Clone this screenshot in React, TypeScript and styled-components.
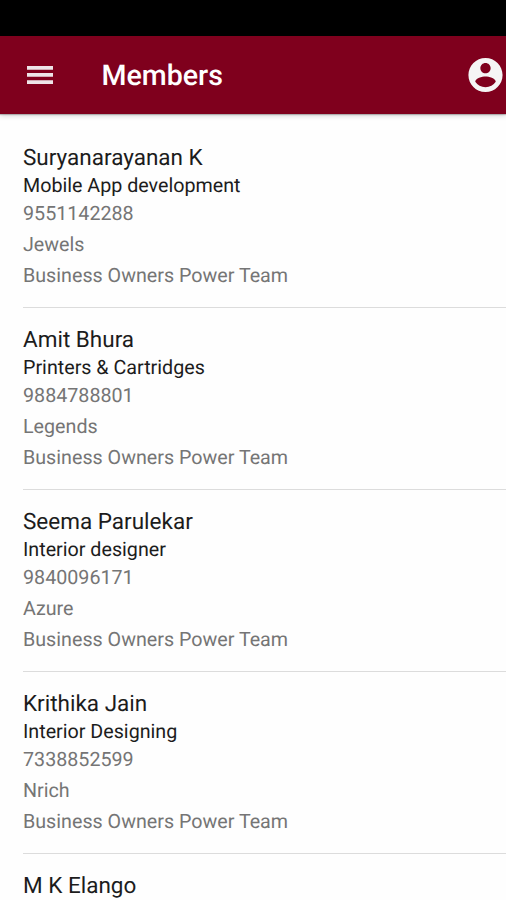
import React from "react";
import styled, { createGlobalStyle } from "styled-components";

const GlobalStyle = createGlobalStyle`
  * { box-sizing: border-box; }
  body {
    margin: 0;
    background: #fefefe;
    font-family: Roboto, sans-serif;
    text-rendering: geometricPrecision;
  }
`;

const Screen = styled.div`
  width: 506px;
  height: 900px;
  overflow: hidden;
  display: flex;
  flex-direction: column;
  background: #fefefe;
`;

const StatusBar = styled.div`
  flex: none;
  height: 36px;
  background: #000;
`;

const Toolbar = styled.header`
  flex: none;
  height: 78px;
  display: flex;
  align-items: center;
  padding-left: 27px;
  background: #7f001d;
  color: #f5f5f5;
  box-shadow: 0 1px 1px rgba(0, 0, 0, 0.22), 0 2px 5px rgba(0, 0, 0, 0.16);
`;

const IconButton = styled.button`
  flex: none;
  display: flex;
  padding: 0;
  border: 0;
  background: none;
  color: inherit;
`;

const MenuButton = styled(IconButton)`
  color: #eee4e8;
`;

const Title = styled.h1`
  flex: 1;
  margin: 0 0 0 48.5px;
  font-size: 28.6px;
  line-height: 36px;
  font-weight: 500;
  color: #fff;
`;

const List = styled.ul`
  list-style: none;
  margin: 0;
  padding: 12px 0 0 23px;
`;

const Item = styled.li`
  height: 182px;
  padding-top: 18px;
  border-bottom: 1px solid #dcdcdc;
`;

const Name = styled.div`
  font-size: 22.5px;
  line-height: 28px;
  color: #1c1c1c;
`;

const Profession = styled.div`
  margin-bottom: -1px;
  font-size: 19.7px;
  line-height: 27px;
  color: #1c1c1c;
`;

const Detail = styled.div`
  font-size: 19.7px;
  line-height: 31px;
  color: #757575;
`;

const members = [
  { name: "Suryanarayanan K", profession: "Mobile App development", phone: "9551142288", chapter: "Jewels", team: "Business Owners Power Team" },
  { name: "Amit Bhura", profession: "Printers & Cartridges", phone: "9884788801", chapter: "Legends", team: "Business Owners Power Team" },
  { name: "Seema Parulekar", profession: "Interior designer", phone: "9840096171", chapter: "Azure", team: "Business Owners Power Team" },
  { name: "Krithika Jain", profession: "Interior Designing", phone: "7338852599", chapter: "Nrich", team: "Business Owners Power Team" },
];

export default function App() {
  return (
    <Screen>
      <GlobalStyle />
      <StatusBar />
      <Toolbar>
        <MenuButton aria-label="Menu">
          <svg width="26" height="20" viewBox="0 0 26 20" fill="currentColor">
            <path d="M0 1h26v3.7H0zM0 8.1h26v3.7H0zM0 15.2h26v3.7H0z" />
          </svg>
        </MenuButton>
        <Title>Members</Title>
        <IconButton aria-label="Profile">
          <svg width="41" height="42" viewBox="0 0 24 24" fill="currentColor">
            <path d="M12 2C6.48 2 2 6.48 2 12s4.48 10 10 10 10-4.48 10-10S17.52 2 12 2zm0 3c1.66 0 3 1.34 3 3s-1.34 3-3 3-3-1.34-3-3 1.34-3 3-3zm0 14.2c-2.5 0-4.71-1.28-6-3.22.03-1.99 4-3.08 6-3.08 1.99 0 5.97 1.09 6 3.08-1.29 1.94-3.5 3.22-6 3.22z" />
          </svg>
        </IconButton>
      </Toolbar>
      <List>
        {members.map((m) => (
          <Item key={m.name}>
            <Name>{m.name}</Name>
            <Profession>{m.profession}</Profession>
            <Detail>{m.phone}</Detail>
            <Detail>{m.chapter}</Detail>
            <Detail>{m.team}</Detail>
          </Item>
        ))}
        <Item>
          <Name>M K Elango</Name>
        </Item>
      </List>
    </Screen>
  );
}
